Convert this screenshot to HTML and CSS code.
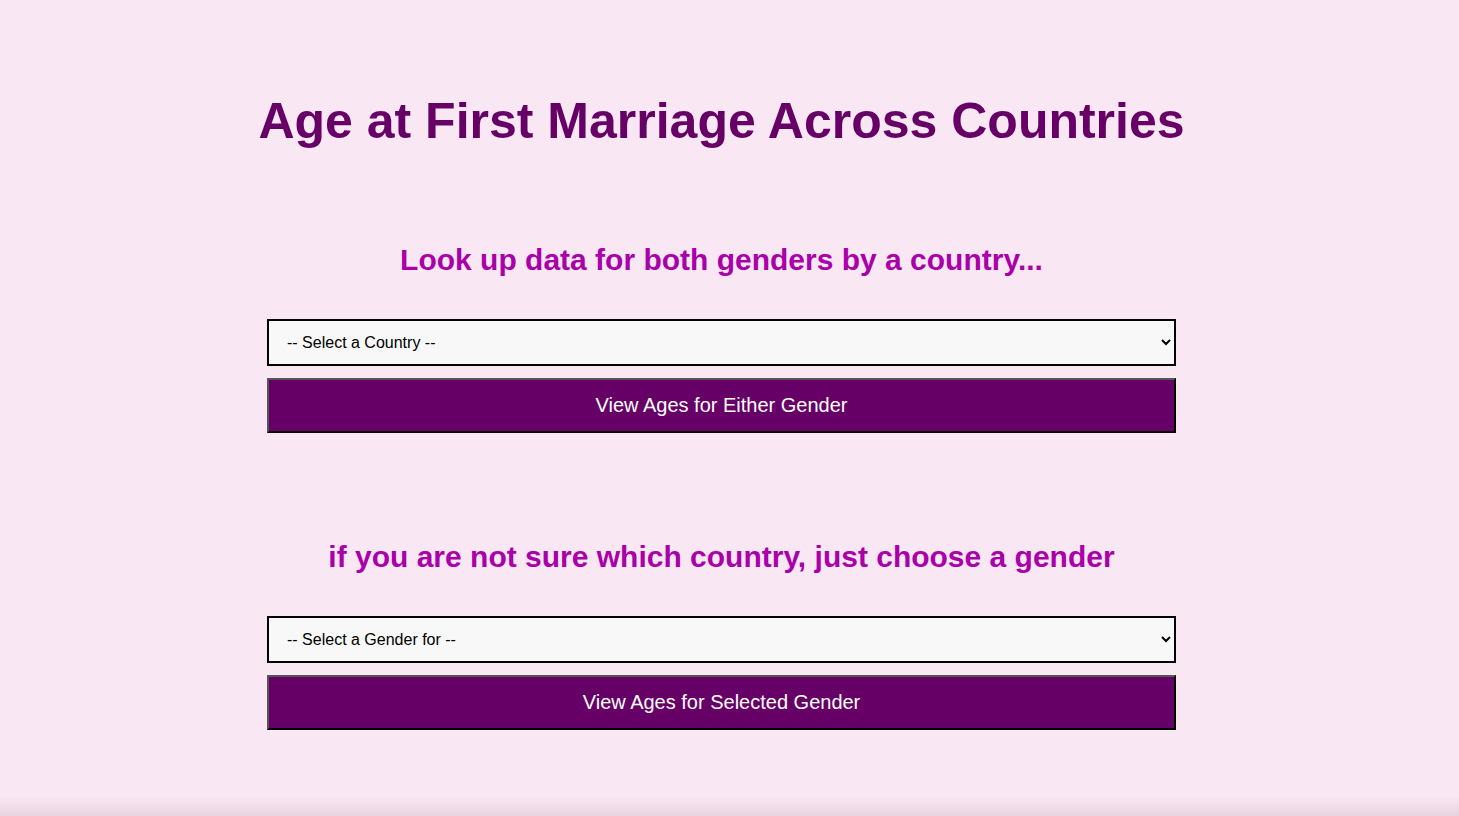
FILE: index.html
```html
<!DOCTYPE html>
<html lang="en">
<head>
<meta charset="utf-8">
<title>Age at First Marriage Across Countries</title>
<link rel="stylesheet" href="styles.css">
</head>
<body>
<main class="page">
  <h1 class="title">Age at First Marriage Across Countries</h1>
  <section class="block">
    <h2 class="subtitle">Look up data for both genders by a country...</h2>
    <select class="picker">
      <option>-- Select a Country --</option>
    </select>
    <button class="action" type="button">View Ages for Either Gender</button>
  </section>
  <section class="block block-second">
    <h2 class="subtitle">if you are not sure which country, just choose a gender</h2>
    <select class="picker">
      <option>-- Select a Gender for --</option>
    </select>
    <button class="action" type="button">View Ages for Selected Gender</button>
  </section>
</main>
<div class="bottom-shade"></div>
</body>
</html>
```
FILE: styles.css
```css
html, body {
  margin: 0;
  padding: 0;
  background: #f9e8f3;
  font-family: "Liberation Sans", Arial, Helvetica, sans-serif;
}
body {
  min-height: 816px;
}
.page {
  width: 909px;
  margin: 0 auto;
  padding: 0 16px 0 0;
  display: flex;
  flex-direction: column;
  align-items: stretch;
  box-sizing: content-box;
}
.title {
  margin: 91px -60px 0 -60px;
  text-align: center;
  font-size: 50px;
  font-weight: bold;
  color: #660066;
  line-height: 60px;
  white-space: nowrap;
}
.block {
  display: flex;
  flex-direction: column;
  margin-top: 91px;
}
.block-second {
  margin-top: 106px;
}
.subtitle {
  margin: 0 -40px;
  text-align: center;
  font-size: 30px;
  line-height: 36px;
  font-weight: bold;
  color: #aa00aa;
  white-space: nowrap;
}
.picker {
  margin-top: 41px;
  height: 47px;
  width: 100%;
  box-sizing: border-box;
  border: 2px solid #000;
  border-radius: 0;
  background: #f8f8f8;
  color: #000;
  font-family: "Liberation Sans", Arial, sans-serif;
  font-size: 16px;
  padding: 0 12px 0 14px;
}
.action {
  margin-top: 12px;
  height: 55px;
  width: 100%;
  box-sizing: border-box;
  background: #660066;
  color: #fff;
  border: 2px solid #555;
  border-right-color: #000;
  border-bottom-color: #000;
  font-family: "Liberation Sans", Arial, sans-serif;
  font-size: 20px;
  cursor: pointer;
}
.bottom-shade {
  position: fixed;
  left: 0;
  right: 0;
  bottom: 0;
  height: 20px;
  background: linear-gradient(to bottom, rgba(200, 170, 190, 0), rgba(200, 170, 190, 0.35));
  pointer-events: none;
}
```
